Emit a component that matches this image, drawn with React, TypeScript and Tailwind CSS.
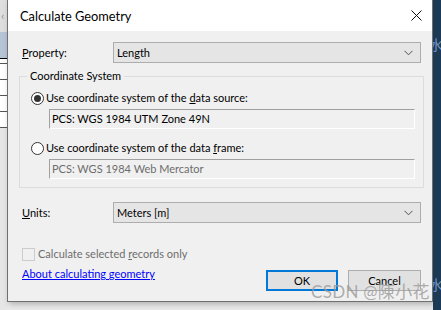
import React from "react";

const font = { fontFamily: 'Lato, "Noto Sans CJK SC", sans-serif' };

function Chevron() {
  return (
    <svg width="9" height="6" viewBox="0 0 9 6" className="block">
      <path d="M0.5 0.8 L4.5 4.8 L8.5 0.8" fill="none" stroke="#505050" strokeWidth="1" />
    </svg>
  );
}

function Combo({ value }: { value: string }) {
  return (
    <div className="flex h-[21px] w-[308px] items-center justify-between border border-[#adadad] bg-[#e5e5e5] pl-[3px] pr-[7px]">
      <span className="text-black">{value}</span>
      <Chevron />
    </div>
  );
}

function Radio({ checked }: { checked: boolean }) {
  return (
    <div className="flex h-[13px] w-[13px] shrink-0 items-center justify-center rounded-full border border-[#333] bg-white">
      {checked && <div className="h-[7px] w-[7px] rounded-full bg-[#333]" />}
    </div>
  );
}

export default function App() {
  return (
    <div className="relative flex h-[310px] w-[441px] overflow-hidden bg-[#e9e9e9] text-[11px] leading-[14px]" style={font}>
      {/* left background strip */}
      <div className="flex w-[7px] flex-col">
        <div className="flex h-[32px] items-center bg-[#dedede] pl-[1px] text-[12px] text-[#999]">‹</div>
        <div className="h-[26px] bg-[#b6c5d6]" />
        <div className="h-[70px] border-t border-black bg-white">
          <div className="h-[5px] border-b border-[#555]" />
          <div className="h-[16px] border-b border-[#555]" />
          <div className="h-[16px] border-b border-[#555]" />
          <div className="h-[16px] border-b border-[#555]" />
          <div className="h-[16px] border-b border-[#555]" />
        </div>
        <div className="flex-1 bg-[#e6e6e6]" />
      </div>

      {/* dialog */}
      <div className="flex h-[302px] w-[426px] flex-col border-x border-b border-[#707070] shadow-[2px_2px_6px_rgba(0,0,0,0.25)]">
        {/* title bar */}
        <div className="flex h-[31px] items-center justify-between bg-white pl-[12px] pr-[10px]">
          <span className="text-[12.8px] text-black">Calculate Geometry</span>
          <svg width="11" height="11" viewBox="0 0 11 11">
            <path d="M0.5 0.5 L10.5 10.5 M10.5 0.5 L0.5 10.5" stroke="#111" strokeWidth="1" />
          </svg>
        </div>
        {/* body */}
        <div className="flex flex-1 flex-col bg-[#f0f0f0] pl-[14px] pr-[10px] pt-[11px] text-black">
          <div className="flex items-center">
            <span className="w-[91px]"><span className="underline">P</span>roperty:</span>
            <Combo value="Length" />
          </div>

          <fieldset className="ml-[-3px] mr-[-2px] mt-[6px] h-[119px] border border-[#dcdcdc] pl-[11px] pr-[8px]">
            <legend className="ml-[-4px] px-[3px]">Coordinate System</legend>
            <div className="mt-[8px] flex items-center gap-[2px]">
              <Radio checked />
              <span>Use coordinate system of the <span className="underline">d</span>ata source:</span>
            </div>
            <div className="ml-[18px] mt-[4px] flex h-[20px] items-center border-b border-l border-r border-t border-b-white border-l-[#a0a0a0] border-r-white border-t-[#a0a0a0] pl-[2px]">
              PCS: WGS 1984 UTM Zone 49N
            </div>
            <div className="mt-[12px] flex items-center gap-[2px]">
              <Radio checked={false} />
              <span>Use coordinate system of the data <span className="underline">f</span>rame:</span>
            </div>
            <div className="ml-[18px] mt-[4px] flex h-[20px] items-center border-b border-l border-r border-t border-b-white border-l-[#a0a0a0] border-r-white border-t-[#a0a0a0] pl-[2px] text-[#6d6d6d]">
              PCS: WGS 1984 Web Mercator
            </div>
          </fieldset>

          <div className="mt-[14px] flex items-center">
            <span className="w-[91px]"><span className="underline">U</span>nits:</span>
            <Combo value="Meters [m]" />
          </div>

          <div className="mt-[24px] flex items-center gap-[3px] text-[#6d6d6d]">
            <div className="h-[13px] w-[13px] border border-[#cccccc] bg-[#f0f0f0]" />
            <span>Calculate selected <span className="underline">r</span>ecords only</span>
          </div>

          <div className="mt-[6px] flex items-start justify-between">
            <span className="text-[#0000ff] underline">About calculating geometry</span>
            <div className="mt-[3px] flex gap-[10px] pr-[1px]">
              <div className="flex h-[21px] w-[72px] items-center justify-center border-2 border-[#0078d7] bg-[#e1e1e1]">OK</div>
              <div className="flex h-[21px] w-[73px] items-center justify-center border border-[#adadad] bg-[#e1e1e1]">Cancel</div>
            </div>
          </div>
        </div>
      </div>

      {/* right background strip */}
      <div className="flex w-[8px] flex-col overflow-hidden bg-[#1c3956]">
        <div className="ml-[-4px] mt-[37px] text-[14px] leading-[16px] text-[#6f95c8]">水</div>
        <div className="ml-[-4px] mt-[224px] text-[14px] leading-[16px] text-[#6f95c8]">水</div>
      </div>

      {/* watermark */}
      <div className="pointer-events-none absolute left-[311px] top-[282px] text-[17px] leading-[20px] tracking-[0.3px] text-[#9a9a9a]/80">
        CSDN @陳小花
      </div>
    </div>
  );
}
